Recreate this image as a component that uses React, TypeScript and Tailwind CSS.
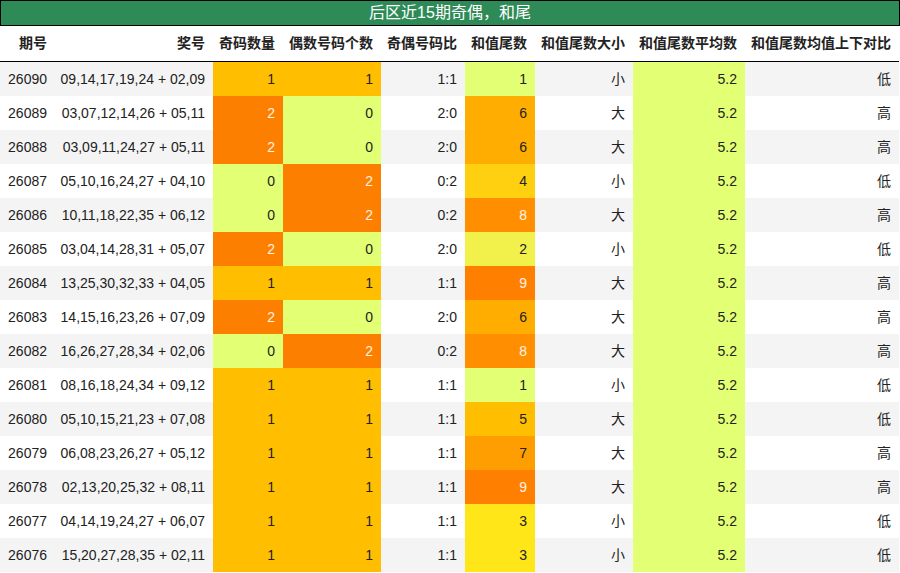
import React from 'react';

type Row = {
  issue: string;
  numbers: string;
  odd: number;
  even: number;
  tail: number;
  size: string;
  cmp: string;
};

const rows: Row[] = [
  { issue: '26090', numbers: '09,14,17,19,24 + 02,09', odd: 1, even: 1, tail: 1, size: '小', cmp: '低' },
  { issue: '26089', numbers: '03,07,12,14,26 + 05,11', odd: 2, even: 0, tail: 6, size: '大', cmp: '高' },
  { issue: '26088', numbers: '03,09,11,24,27 + 05,11', odd: 2, even: 0, tail: 6, size: '大', cmp: '高' },
  { issue: '26087', numbers: '05,10,16,24,27 + 04,10', odd: 0, even: 2, tail: 4, size: '小', cmp: '低' },
  { issue: '26086', numbers: '10,11,18,22,35 + 06,12', odd: 0, even: 2, tail: 8, size: '大', cmp: '高' },
  { issue: '26085', numbers: '03,04,14,28,31 + 05,07', odd: 2, even: 0, tail: 2, size: '小', cmp: '低' },
  { issue: '26084', numbers: '13,25,30,32,33 + 04,05', odd: 1, even: 1, tail: 9, size: '大', cmp: '高' },
  { issue: '26083', numbers: '14,15,16,23,26 + 07,09', odd: 2, even: 0, tail: 6, size: '大', cmp: '高' },
  { issue: '26082', numbers: '16,26,27,28,34 + 02,06', odd: 0, even: 2, tail: 8, size: '大', cmp: '高' },
  { issue: '26081', numbers: '08,16,18,24,34 + 09,12', odd: 1, even: 1, tail: 1, size: '小', cmp: '低' },
  { issue: '26080', numbers: '05,10,15,21,23 + 07,08', odd: 1, even: 1, tail: 5, size: '大', cmp: '低' },
  { issue: '26079', numbers: '06,08,23,26,27 + 05,12', odd: 1, even: 1, tail: 7, size: '大', cmp: '高' },
  { issue: '26078', numbers: '02,13,20,25,32 + 08,11', odd: 1, even: 1, tail: 9, size: '大', cmp: '高' },
  { issue: '26077', numbers: '04,14,19,24,27 + 06,07', odd: 1, even: 1, tail: 3, size: '小', cmp: '低' },
  { issue: '26076', numbers: '15,20,27,28,35 + 02,11', odd: 1, even: 1, tail: 3, size: '小', cmp: '低' },
];

// heat colours, light lime -> orange
const countColor: Record<number, string> = {
  0: 'bg-[#e3ff73]',
  1: 'bg-[#ffbf00]',
  2: 'bg-[#fd7f00] text-white/90',
};

const tailColor: Record<number, string> = {
  1: 'bg-[#e3ff73]',
  2: 'bg-[#f2f04a]',
  3: 'bg-[#ffe619]',
  4: 'bg-[#ffd010]',
  5: 'bg-[#ffbf00]',
  6: 'bg-[#ffad00]',
  7: 'bg-[#ff9e00]',
  8: 'bg-[#ff8f00] text-white/90',
  9: 'bg-[#ff7f00] text-white/90',
};

const headers = ['期号', '奖号', '奇码数量', '偶数号码个数', '奇偶号码比', '和值尾数', '和值尾数大小', '和值尾数平均数', '和值尾数均值上下对比'];

const grid = 'grid grid-cols-[55px_158px_70px_98px_84px_70px_98px_112px_154px]';
const cell = 'flex items-center justify-end px-2 whitespace-nowrap';

export default function App() {
  return (
    <div
      className="w-[900px] h-[573px] bg-white text-[14px] text-[#222] overflow-hidden"
      style={{ fontFamily: '"Liberation Sans", "Noto Sans CJK SC", sans-serif' }}
    >
      <div className="h-[26px] border border-black bg-[#2e8b57] flex items-center justify-center text-[16px] text-white">
        后区近15期奇偶，和尾
      </div>
      <div className={`${grid} w-[899px] h-[36px] border-b border-black font-bold`}>
        {headers.map((h) => (
          <div key={h} className={cell}>
            {h}
          </div>
        ))}
      </div>
      <div className="w-[899px]">
        {rows.map((r, i) => (
          <div key={r.issue} className={`${grid} h-[34px] ${i % 2 === 0 ? 'bg-[#f4f4f4]' : 'bg-white'}`}>
            <div className={cell}>{r.issue}</div>
            <div className={cell}>{r.numbers}</div>
            <div className={`${cell} ${countColor[r.odd]}`}>{r.odd}</div>
            <div className={`${cell} ${countColor[r.even]}`}>{r.even}</div>
            <div className={cell}>
              {r.odd}:{r.even}
            </div>
            <div className={`${cell} ${tailColor[r.tail]}`}>{r.tail}</div>
            <div className={cell}>{r.size}</div>
            <div className={`${cell} bg-[#e3ff73]`}>5.2</div>
            <div className={cell}>{r.cmp}</div>
          </div>
        ))}
      </div>
    </div>
  );
}
